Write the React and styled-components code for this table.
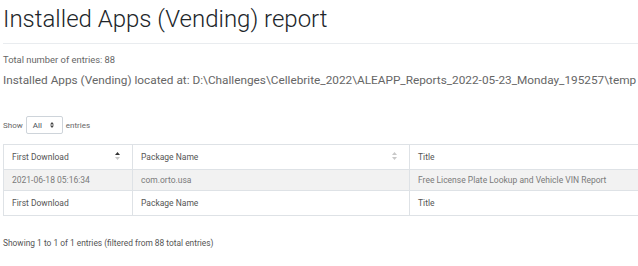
import React from "react"
import styled, { createGlobalStyle } from "styled-components"

const GlobalStyle = createGlobalStyle`
  html, body {
    margin: 0;
    padding: 0;
    background: #fff;
    overflow: hidden;
  }
  body {
    font-family: Roboto, "Liberation Sans", sans-serif;
    color: #6c6c6c;
  }
`

const Page = styled.div`
  width: 638px;
  height: 266px;
  padding-left: 3px;
  box-sizing: border-box;
  overflow: hidden;
`

const Title = styled.h1`
  margin: 0;
  padding-top: 3px;
  height: 40px;
  font-size: 24px;
  font-weight: 300;
  line-height: 32px;
  color: #212529;
  border-bottom: 1px solid #e9ecef;
  white-space: nowrap;
`

const Summary = styled.div`
  margin-top: 10px;
  font-size: 9.4px;
  line-height: 12px;
  color: #666;
`

const Location = styled.div`
  margin-top: 6px;
  font-size: 11.8px;
  line-height: 16px;
  color: #666;
  white-space: nowrap;
`

const LengthRow = styled.div`
  margin-top: 28px;
  display: flex;
  align-items: center;
  gap: 3px;
  font-size: 8px;
  color: #666;
`

const LengthSelect = styled.div`
  width: 37px;
  height: 18px;
  box-sizing: border-box;
  border: 1px solid #ced4da;
  border-radius: 2px;
  display: flex;
  align-items: center;
  justify-content: space-between;
  padding: 0 8px 0 6px;
  font-size: 8px;
  color: #495057;
`

const Caret = styled.svg`
  width: 4px;
  height: 6px;
`

const Table = styled.table`
  margin-top: 10px;
  border-collapse: collapse;
  width: 700px;
  table-layout: fixed;
  font-size: 8.5px;
`

const Cell = styled.td`
  position: relative;
  border: 1px solid #dee2e6;
  padding: 0 8px;
  height: ${(p) => p.$h}px;
  box-sizing: border-box;
  white-space: nowrap;
  color: ${(p) => (p.$muted ? "#7a7a7a" : "#555")};
  background: ${(p) => (p.$shade ? "#f2f2f2" : "#fff")};
`

const SortIcon = styled.svg`
  position: absolute;
  right: 12px;
  top: 50%;
  width: 5px;
  height: 8px;
  margin-top: -5px;
`

const Info = styled.div`
  margin-top: 22px;
  font-size: 8.4px;
  color: #555;
`

const Sort = ({ active }) => (
  <SortIcon viewBox="0 0 5 8">
    <path d="M2.5 0 L5 3 L0 3 Z" fill={active ? "#333" : "#c8c8c8"} />
    <path d="M2.5 8 L5 5 L0 5 Z" fill="#c8c8c8" />
  </SortIcon>
)

const columns = ["First Download", "Package Name", "Title"]
const rows = [["2021-06-18 05:16:34", "com.orto.usa", "Free License Plate Lookup and Vehicle VIN Report"]]

export default function App() {
  return (
    <Page>
      <GlobalStyle />
      <Title>Installed Apps (Vending) report</Title>
      <Summary>Total number of entries: 88</Summary>
      <Location>
        Installed Apps (Vending) located at: D:\Challenges\Cellebrite_2022\ALEAPP_Reports_2022-05-23_Monday_195257\temp
      </Location>
      <LengthRow>
        Show
        <LengthSelect>
          All
          <Caret viewBox="0 0 4 6">
            <path d="M2 0 L4 2.4 L0 2.4 Z M2 6 L4 3.6 L0 3.6 Z" fill="#444" />
          </Caret>
        </LengthSelect>
        entries
      </LengthRow>
      <Table>
        <colgroup>
          <col style={{ width: 129 }} />
          <col style={{ width: 277 }} />
          <col style={{ width: 294 }} />
        </colgroup>
        <thead>
          <tr>
            {columns.map((c, i) => (
              <Cell as="th" key={c} $h={25} style={{ fontWeight: 400, textAlign: "left" }}>
                {c}
                {i < 2 && <Sort active={i === 0} />}
              </Cell>
            ))}
          </tr>
        </thead>
        <tbody>
          {rows.map((r) => (
            <tr key={r[0]}>
              {r.map((v) => (
                <Cell key={v} $h={21} $shade $muted>
                  {v}
                </Cell>
              ))}
            </tr>
          ))}
        </tbody>
        <tfoot>
          <tr>
            {columns.map((c) => (
              <Cell key={c} $h={25}>
                {c}
              </Cell>
            ))}
          </tr>
        </tfoot>
      </Table>
      <Info>Showing 1 to 1 of 1 entries (filtered from 88 total entries)</Info>
    </Page>
  )
}
